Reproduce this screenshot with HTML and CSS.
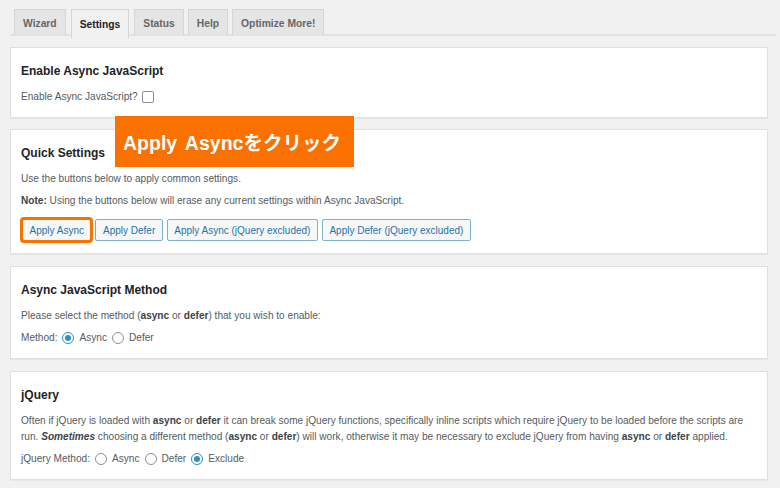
FILE: index.html
```html
<!DOCTYPE html>
<html lang="en">
<head>
<meta charset="utf-8">
<title>Async JavaScript Settings</title>
<link rel="stylesheet" href="styles.css">
</head>
<body>
<div class="wrap">
  <nav class="tabs">
    <a class="tab">Wizard</a>
    <a class="tab active">Settings</a>
    <a class="tab">Status</a>
    <a class="tab">Help</a>
    <a class="tab">Optimize More!</a>
  </nav>

  <section class="card card-first">
    <h2>Enable Async JavaScript</h2>
    <p class="row">Enable Async JavaScript? <span class="checkbox"></span></p>
  </section>

  <section class="card card-quick">
    <div class="callout">Apply Asyncをクリック</div>
    <h2>Quick Settings</h2>
    <p>Use the buttons below to apply common settings.</p>
    <p><b>Note:</b> Using the buttons below will erase any current settings within Async JavaScript.</p>
    <div class="buttons">
      <button class="btn highlight">Apply Async</button>
      <button class="btn">Apply Defer</button>
      <button class="btn">Apply Async (jQuery excluded)</button>
      <button class="btn">Apply Defer (jQuery excluded)</button>
    </div>
  </section>

  <section class="card">
    <h2>Async JavaScript Method</h2>
    <p>Please select the method (<b>async</b> or <b>defer</b>) that you wish to enable:</p>
    <p class="row">Method: <span class="radio checked"></span> Async <span class="radio"></span> Defer</p>
  </section>

  <section class="card">
    <h2>jQuery</h2>
    <p><span class="line">Often if jQuery is loaded with <b>async</b> or <b>defer</b> it can break some jQuery functions, specifically inline scripts which require jQuery to be loaded before the scripts are</span><br><span class="line">run. <b><i>Sometimes</i></b> choosing a different method (<b>async</b> or <b>defer</b>) will work, otherwise it may be necessary to exclude jQuery from having <b>async</b> or <b>defer</b> applied.</span></p>
    <p class="row">jQuery Method: <span class="radio"></span> Async <span class="radio"></span> Defer <span class="radio checked"></span> Exclude</p>
  </section>
</div>
</body>
</html>
```

FILE: styles.css
```css
* { box-sizing: border-box; }
html, body {
  margin: 0;
  background: #f1f1f1;
}
body {
  font-family: "Liberation Sans", Arial, "Noto Sans CJK JP", sans-serif;
  font-size: 10.1px;
  color: #555b61;
}
.wrap {
  padding: 9px 4px 0 10px;
}
.tabs {
  display: flex;
  gap: 5px;
  padding-left: 4px;
  height: 27px;
  border-bottom: 2px solid #e2e2e2;
  margin-bottom: 11px;
}
.tab {
  height: 27px;
  padding: 0 8px;
  display: flex;
  align-items: center;
  font-weight: bold;
  font-size: 10.3px;
  color: #666;
  background: #e5e5e5;
  border: 1px solid #d6d6d6;
  border-bottom: none;
}
.tab.active {
  background: #f1f1f1;
  color: #1d2327;
  height: 29px;
}
.tab:nth-child(n+4) { margin-left: -1px; }
.card {
  position: relative;
  width: 758px;
  background: #fff;
  border: 1px solid #e0e0e0;
  box-shadow: 0 1px 1px rgba(0,0,0,0.04);
  padding: 15px 10px 12px;
  margin-bottom: 12px;
}
.card-first { margin-bottom: 11px; }
h2 {
  margin: 0 0 10px;
  font-size: 12px;
  line-height: 16px;
  font-weight: bold;
  color: #1d2327;
}
p {
  margin: 0 0 6px;
  line-height: 16px;
}
p:last-child { margin-bottom: 0; }
b { color: #3c434a; }
.line { white-space: nowrap; }
.row {
  display: flex;
  align-items: center;
  gap: 4px;
}
.checkbox {
  display: inline-block;
  width: 12px;
  height: 12px;
  border: 1px solid #8c8f94;
  border-radius: 2px;
  background: #fff;
}
.radio {
  display: inline-block;
  width: 12px;
  height: 12px;
  border: 1px solid #8c8f94;
  border-radius: 50%;
  background: #fff;
  position: relative;
  margin: 0 1px;
}
.radio.checked {
  border-color: #2c8fc5;
}
.radio.checked::after {
  content: "";
  position: absolute;
  left: 2px;
  top: 2px;
  width: 6px;
  height: 6px;
  border-radius: 50%;
  background: #2c8fc5;
}
.buttons {
  display: flex;
  align-items: center;
  gap: 4px;
  margin-top: 10px;
}
.btn {
  font-family: inherit;
  font-size: 10px;
  height: 22px;
  padding: 0 6.5px;
  color: #1f72a8;
  background: #f6f7f7;
  border: 1px solid #7fb0cd;
  border-radius: 2px;
}
.btn.highlight {
  outline: 3px solid #f97100;
  outline-offset: -1px;
  margin-left: 1px;
}
.callout {
  position: absolute;
  left: 104px;
  top: -14px;
  width: 239px;
  height: 51px;
  background: #fb7100;
  color: #fff;
  font-weight: bold;
  font-size: 19.5px;
  word-spacing: 3px;
  white-space: nowrap;
  display: flex;
  align-items: center;
  padding-left: 8px;
  z-index: 2;
}
```
